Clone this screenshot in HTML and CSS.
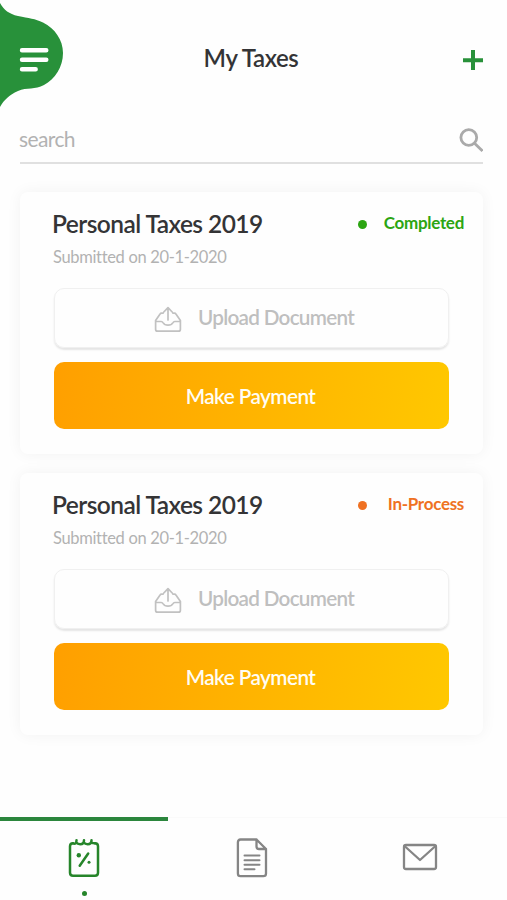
FILE: index.html
```html
<!DOCTYPE html>
<html lang="en">
<head>
<meta charset="utf-8">
<title>My Taxes</title>
<link rel="stylesheet" href="styles.css">
</head>
<body>
<svg class="symbols" aria-hidden="true">
  <symbol id="upload" viewBox="0 0 28 27">
    <path d="M9 7.2H7.6Q6.5 7.2 5.9 8.2L1.6 14.5V23.2Q1.6 25.2 3.6 25.2H24.4Q26.4 25.2 26.4 23.2V14.5L22.1 8.2Q21.5 7.2 20.4 7.2H19M1.6 15.5H7.2Q8.4 15.5 9 16.6Q10.5 19.2 14 19.2Q17.5 19.2 19 16.6Q19.6 15.5 20.8 15.5H26.4M14 14V1.8M9.8 6L14 1.6L18.2 6"/>
  </symbol>
</svg>
<div class="app">
  <header class="header">
    <button class="menu" aria-label="Menu">
      <svg width="64" height="110" viewBox="0 0 64 110">
        <path class="blob" d="M0 3C4 10 9 14 18 16C29 18.500 35 18.500 43 22.500C55 28.500 63 40 63 53C63 67 55 79 44 85C35 90 27 87 18 91C9 95 4 100 0 107Z"/>
        <path class="bars" d="M22 50.300H46.300M22 59.700H46.300M22 69.200H35.700"/>
      </svg>
    </button>
    <h1 class="title">My Taxes</h1>
    <button class="add" aria-label="Add">
      <svg width="20" height="20" viewBox="0 0 20 20"><path d="M10 0V20M0 10.300H20"/></svg>
    </button>
  </header>

  <div class="search">
    <span class="search-text">search</span>
    <svg class="search-icon" width="24" height="24" viewBox="0 0 24 24"><circle cx="9.800" cy="9.500" r="7.900"/><path d="M15.500 15.300L23.500 23"/></svg>
  </div>

  <main class="cards">
    <section class="card">
      <div class="card-head">
        <h2 class="card-title">Personal Taxes 2019</h2>
        <div class="status done"><i class="dot"></i><span class="completed">Completed</span></div>
      </div>
      <p class="date">Submitted on 20-1-2020</p>
      <button class="upload"><svg width="28" height="27"><use href="#upload"/></svg><span>Upload Document</span></button>
      <button class="pay"><span>Make Payment</span></button>
    </section>
    <section class="card">
      <div class="card-head">
        <h2 class="card-title">Personal Taxes 2019</h2>
        <div class="status process"><i class="dot"></i><span class="in-process">In-Process</span></div>
      </div>
      <p class="date">Submitted on 20-1-2020</p>
      <button class="upload"><svg width="28" height="27"><use href="#upload"/></svg><span>Upload Document</span></button>
      <button class="pay"><span>Make Payment</span></button>
    </section>
  </main>

  <nav class="tabs">
    <a class="tab active">
      <svg width="32" height="40" viewBox="0 0 32 40">
        <path d="M5 5.300Q2 5.300 2 8.300V34.700Q2 37.700 5 37.700H27Q30 37.700 30 34.700V8.300Q30 5.300 27 5.300"/>
        <path d="M5 5.300Q8.500 6.800 8.500 2.300M8.500 4.500Q9.500 6.300 12.200 6.300Q16 6.300 16 2.300M16 4.500Q17 6.300 19.700 6.300Q23.500 6.300 23.500 2.300M23.500 4.500Q24.500 5.300 27 5.300M20.200 15.500L11.700 27.700"/>
        <circle class="fill" cx="10.800" cy="17.200" r="2.200"/><circle class="fill" cx="21" cy="24.200" r="1.500"/>
      </svg>
      <i class="tab-dot"></i>
    </a>
    <a class="tab">
      <svg width="32" height="40" viewBox="0 0 32 40">
        <path d="M4.500 1.500H20.500L30 11V35.500Q30 38.200 27.300 38.200H4.500Q1.900 38.200 1.900 35.500V4.200Q1.900 1.500 4.500 1.500ZM20.500 1.500V8.500Q20.500 11 23 11H30"/>
        <path class="lines" d="M8.500 17.500H23.500M8.500 22.200H23.500M8.500 26.700H23.500M8.500 31.300H18.500"/>
      </svg>
    </a>
    <a class="tab">
      <svg width="36" height="28" viewBox="0 0 36 28">
        <rect x="2" y="2" width="32" height="24" rx="2"/><path d="M2.500 3L18 17L33.500 3"/>
      </svg>
    </a>
  </nav>
</div>
</body>
</html>
```
FILE: styles.css
```css
* { box-sizing: border-box; }
body { margin: 0; background: #fefefe; font-family: Lato, "Liberation Sans", sans-serif; }
button { padding: 0; border: 0; background: none; font: inherit; }
h1, h2, p { margin: 0; font-weight: 600; white-space: nowrap; }
svg { display: block; fill: none; stroke-linecap: round; stroke-linejoin: round; }
.symbols { width: 0; height: 0; position: absolute; }
.app { width: 507px; height: 900px; display: flex; flex-direction: column; overflow: hidden; }

.header { height: 118px; display: grid; grid-template-columns: 64px 1fr 64px; padding-right: 5px; }
.menu { align-self: start; }
.blob { fill: #28913a; }
.bars { stroke: #fff; stroke-width: 4.4; }
.title { justify-self: center; font-size: 24px; line-height: 30px; color: #343436; margin-top: 43px; letter-spacing: -0.4px; }
.add { justify-self: end; align-self: start; margin: 50px 19px 0 0; }
.add svg { stroke: #28913a; stroke-width: 4; stroke-linecap: butt; }

.search { height: 46px; margin: 0 24px 0 20px; border-bottom: 2px solid #e0e0e0; display: flex; justify-content: space-between; }
.search-text { font-size: 21px; line-height: 26px; margin: 8px 0 0 -1px; color: #b2b2b2; letter-spacing: -0.6px; }
.search-icon { margin-top: 10px; stroke: #aaa; stroke-width: 2.8; stroke-linecap: butt; }

.cards { display: flex; flex-direction: column; gap: 19px; padding: 28px 24px 0 20px; }
.card { height: 262px; padding: 17px 34px 0; border-radius: 8px; background: #fefefe; box-shadow: 0 0 15px rgba(0, 0, 0, .05); display: flex; flex-direction: column; }
.card-head { display: flex; justify-content: space-between; margin: 0 -14px 0 -2px; height: 30px; }
.card-title { font-size: 24.5px; line-height: 30px; color: #343436; letter-spacing: -0.55px; }
.status { display: grid; grid-template-columns: 9px 1fr; width: 106px; align-items: center; height: 27px; font-size: 17px; font-weight: 700; letter-spacing: -0.3px; margin-right: -1px; }
.status span { justify-self: end; white-space: nowrap; }
.dot { width: 9px; height: 9px; border-radius: 50%; background: currentColor; margin-top: 3px; }
.done { color: #2ca512; }
.process { color: #ef7122; }
.date { font-size: 16.5px; line-height: 20px; font-weight: 400; color: #b2b2b2; margin: 8px 0 0 -1px; letter-spacing: -0.33px; }
.upload { width: 395px; height: 60px; margin-top: 21px; border: 1px solid #f0f0f0; border-radius: 10px; box-shadow: 0 2px 2px rgba(0, 0, 0, .1); display: flex; align-items: center; padding-left: 99px; gap: 16px; color: #bfbfbf; font-size: 20.7px; font-weight: 600; letter-spacing: -0.72px; white-space: nowrap; }
.upload svg { stroke: #c1c1c1; stroke-width: 1.7; margin-top: 2px; flex: none; }
.upload span { margin-top: -2px; }
.pay { width: 395px; height: 67px; margin-top: 14px; padding-right: 2px; border-radius: 10px; background: linear-gradient(100deg, #ff9f00, #ffc800); color: #fffdf4; font-size: 20.7px; font-weight: 600; letter-spacing: -0.55px; }
.pay span { display: inline-block; }

.tabs { margin-top: auto; height: 83px; display: grid; grid-template-columns: repeat(3, 168px); border-top: 1px solid #fafafa; }
.tab { display: flex; flex-direction: column; align-items: center; padding-top: 17px; border-top: 4px solid transparent; height: 83px; margin-top: -1px; }
.tab svg { stroke: #858585; stroke-width: 2.3; }
.tab:last-child { padding-top: 22px; }
.tab.active { border-color: #2b863d; padding-top: 17px; }
.tab.active svg { stroke: #26852a; stroke-width: 2.5; }
.tab.active .fill { fill: #26852a; stroke: none; }
.tab .lines { stroke-width: 2; }
.tab-dot { width: 5px; height: 5px; border-radius: 50%; background: #26852a; margin-top: 13px; }
```
